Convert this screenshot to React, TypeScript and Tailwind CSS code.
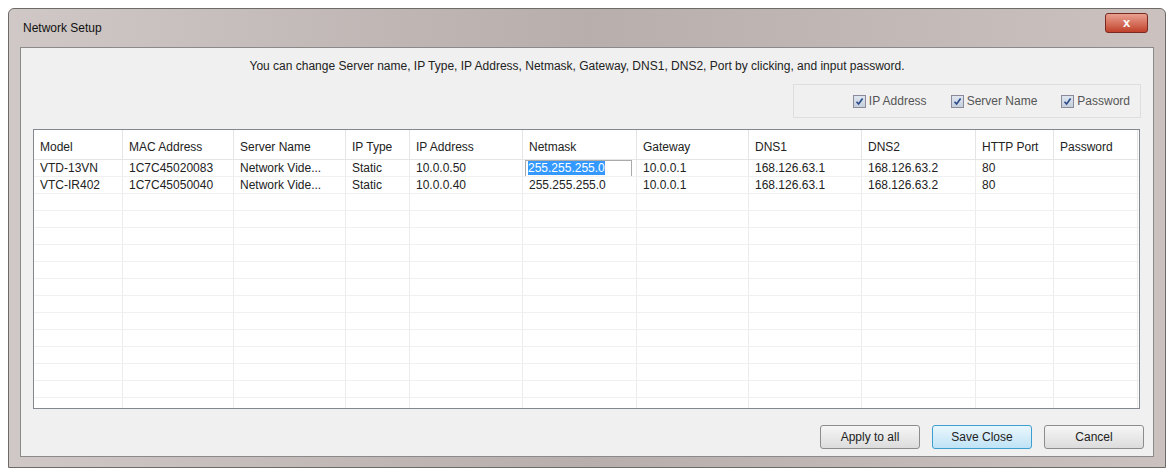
import React from "react";

const cols = [
  { n: "Model", w: 89 },
  { n: "MAC Address", w: 111 },
  { n: "Server Name", w: 112 },
  { n: "IP Type", w: 64 },
  { n: "IP Address", w: 113 },
  { n: "Netmask", w: 114 },
  { n: "Gateway", w: 112 },
  { n: "DNS1", w: 113 },
  { n: "DNS2", w: 114 },
  { n: "HTTP Port", w: 78 },
  { n: "Password", w: 84 },
];
const rows = [
  ["VTD-13VN", "1C7C45020083", "Network Vide...", "Static", "10.0.0.50", "255.255.255.0", "10.0.0.1", "168.126.63.1", "168.126.63.2", "80", ""],
  ["VTC-IR402", "1C7C45050040", "Network Vide...", "Static", "10.0.0.40", "255.255.255.0", "10.0.0.1", "168.126.63.1", "168.126.63.2", "80", ""],
];

function Check({ label }: { label: string }) {
  return (
    <div className="flex items-center gap-[3px]">
      <div className="w-[13px] h-[13px] border border-[#8a8a9a] bg-gradient-to-b from-[#dfe6f0] to-[#c4cfdc] flex items-center justify-center">
        <svg width="9" height="9" viewBox="0 0 9 9"><path d="M1.5 4.8 L3.6 7 L7.6 1.5" stroke="#2a4a8a" strokeWidth="1.6" fill="none" /></svg>
      </div>
      <span>{label}</span>
    </div>
  );
}

function Btn({ label, def }: { label: string; def?: boolean }) {
  return (
    <div className={`w-[100px] h-[24px] flex items-center justify-center rounded-[3px] border ${def ? "border-[#3c9fd0] bg-gradient-to-b from-[#eaf6fd] to-[#bfe3f6]" : "border-[#8c8c8c] bg-gradient-to-b from-[#f6f6f6] to-[#dcdcdc]"}`}>
      {label}
    </div>
  );
}

export default function App() {
  return (
    <div className="w-[1176px] h-[471px] bg-white pt-[8px] px-[8px] text-[12px] text-[#222]" style={{ fontFamily: '"Liberation Sans", Arial, sans-serif' }}>
      <div className="w-[1158px] h-[460px] rounded-t-[6px] border border-[#6e6a68] bg-gradient-to-r from-[#cfc8c6] via-[#b8aeac] to-[#cbc2c0] flex flex-col px-[11px] pb-[10px]">
        <div className="h-[38px] flex items-start justify-between pt-[10px]">
          <span className="pl-[3px] text-[#111]">Network Setup</span>
          <div className="w-[43px] h-[20px] -mt-[6px] mr-[6px] rounded-[3px] border border-[#7a2a20] bg-gradient-to-b from-[#e8a090] to-[#c0402a] flex items-center justify-center text-white font-bold text-[13px]">x</div>
        </div>
        <div className="flex-1 bg-[#f0f0f0] border border-[#8a8a8a] flex flex-col px-[12px]">
          <div className="text-center h-[36px] pt-[9px] pr-[20px]">You can change Server name, IP Type, IP Address, Netmask, Gateway, DNS1, DNS2, Port by clicking, and input password.</div>
          <div className="flex justify-end">
            <div className="w-[348px] h-[34px] border border-[#dedede] flex items-center justify-end gap-[24px] pr-[10px] text-[#555]">
              <Check label="IP Address" />
              <Check label="Server Name" />
              <Check label="Password" />
            </div>
          </div>
          <div className="mt-[11px] w-[1107px] h-[280px] border border-[#828790] bg-white flex flex-col overflow-hidden">
            <div className="flex h-[30px] border-b border-[#e5e5e5] shrink-0">
              {cols.map((c) => (
                <div key={c.n} style={{ width: c.w }} className="border-r border-[#e5e5e5] pl-[6px] pt-[8px] shrink-0">{c.n}</div>
              ))}
            </div>
            {Array.from({ length: 15 }).map((_, r) => (
              <div key={r} className="flex h-[17px] border-b border-[#f0f0f0] shrink-0">
                {cols.map((c, i) => {
                  const v = rows[r]?.[i] ?? "";
                  const sel = r === 0 && i === 5;
                  return (
                    <div key={i} style={{ width: c.w }} className="border-r border-[#ececec] shrink-0 leading-[17px] pl-[6px] whitespace-nowrap overflow-hidden">
                      {sel ? (
                        <span className="inline-block -ml-[4px] pl-[2px] pr-[26px] border border-[#aaa] leading-[15px]"><span className="bg-[#3399ff] text-white">{v}</span></span>
                      ) : v}
                    </div>
                  );
                })}
              </div>
            ))}
          </div>
          <div className="flex justify-end gap-[12px] mt-[16px] -mr-[3px]">
            <Btn label="Apply to all" />
            <Btn label="Save Close" def />
            <Btn label="Cancel" />
          </div>
        </div>
      </div>
    </div>
  );
}
